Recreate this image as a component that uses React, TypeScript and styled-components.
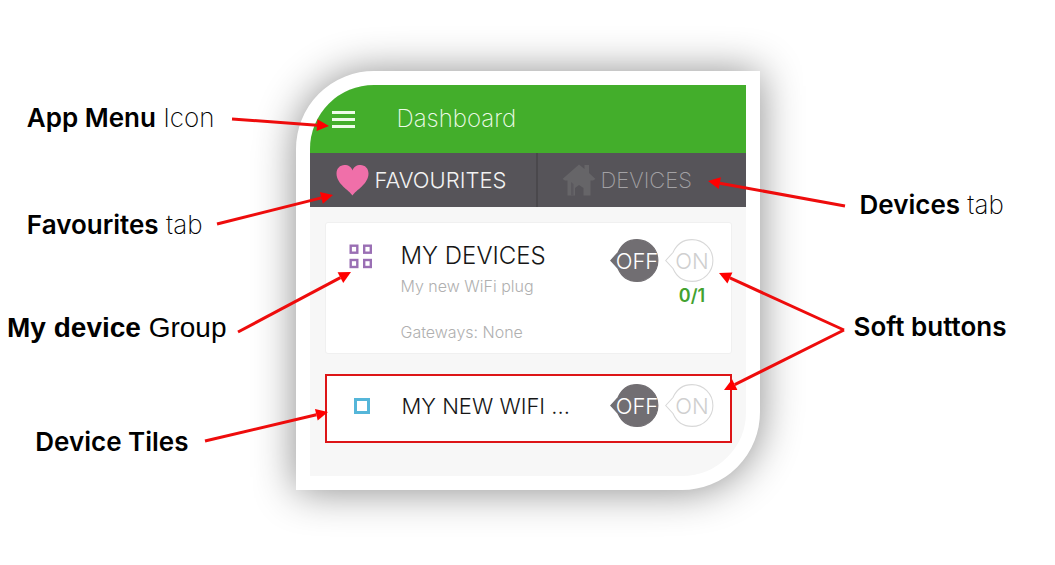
import React from "react";
import styled, { createGlobalStyle } from "styled-components";

const GlobalStyle = createGlobalStyle`
  *, *::before, *::after { box-sizing: border-box; }
  body {
    margin: 0;
    background: #fff;
    color: #000;
    font-family: Inter, "Liberation Sans", sans-serif;
  }
  button {
    border: 0;
    padding: 0;
    background: none;
    font: inherit;
    color: inherit;
    cursor: pointer;
  }
`;

const Figure = styled.main`
  display: grid;
  grid-template-columns: minmax(max-content, 1fr) 464px minmax(max-content, 1fr);
  padding: 71px 0;
`;

const Labels = styled.div<{ $side: "left" | "right" }>`
  display: grid;
  align-content: start;
  justify-items: ${(p) => (p.$side === "left" ? "end" : "start")};
  grid-template-rows: ${(p) => (p.$side === "left" ? "107px 103px 114px auto" : "122px auto")};
  padding-top: ${(p) => (p.$side === "left" ? 31 : 118)}px;
`;

const Label = styled.p<{ $lead: number; $side?: "left" | "right"; $plain?: boolean }>`
  margin: 0;
  font-size: ${(p) => (p.$plain ? 28 : 26)}px;
  line-height: 32px;
  font-weight: ${(p) => (p.$plain ? 400 : 200)};
  font-family: ${(p) => (p.$plain ? '"Liberation Sans", sans-serif' : "inherit")};
  white-space: nowrap;
  ${(p) => (p.$side === "right" ? "padding-left" : "padding-right")}: ${(p) => p.$lead}px;

  b { font-weight: ${(p) => (p.$plain ? 700 : 600)}; }
`;

const PhoneWrap = styled.div`
  position: relative;
`;

const Phone = styled.section`
  border: 14px solid #fff;
  border-radius: 78px 0 78px 0;
  overflow: hidden;
  background: #f7f7f7;
  box-shadow: 0 1px 42px rgba(0, 0, 0, 0.46);
`;

const Header = styled.header`
  display: flex;
  align-items: center;
  gap: 42px;
  height: 68px;
  padding-left: 22px;
  background: #43ae2b;
  color: #eefbe9;
`;

const MenuButton = styled.button`
  display: flex;
  flex-direction: column;
  gap: 4px;
  width: 23px;
`;

const MenuBar = styled.span`
  height: 3px;
  width: 100%;
  background: #eefbe9;
`;

const Title = styled.h1`
  margin: 0;
  font-size: 24px;
  line-height: 28px;
  font-weight: 200;
`;

const Tabs = styled.nav`
  display: grid;
  grid-template-columns: 226fr 210fr;
  height: 54px;
  background: #565459;
`;

const Tab = styled.button<{ $active?: boolean }>`
  display: flex;
  align-items: center;
  gap: 5px;
  padding-left: 26px;
  font-size: 22px;
  line-height: 28px;
  font-weight: ${(p) => (p.$active ? 300 : 200)};
  color: ${(p) => (p.$active ? "#f2f2f2" : "#a3a2a5")};

  & + & { border-left: 2px solid #4a484c; padding-left: 24px; }
`;

const Content = styled.div`
  display: grid;
  gap: 20px;
  padding: 15px 14px 33px 15px;
`;

const Card = styled.article<{ $marked?: boolean }>`
  display: grid;
  grid-template-columns: 75px 1fr auto;
  align-items: start;
  background: #fff;
  border: ${(p) => (p.$marked ? "2px solid #dd1517" : "1px solid #f0f0f0")};
  border-radius: ${(p) => (p.$marked ? 0 : 3)}px;
  min-height: ${(p) => (p.$marked ? 69 : 132)}px;
  padding: ${(p) => (p.$marked ? "8px 16px 0 0" : "16px 17px 0 0")};
`;

const IconCell = styled.span<{ $marked?: boolean }>`
  display: flex;
  padding: ${(p) => (p.$marked ? "14px 0 0 27px" : "5px 0 0 23px")};
`;

const Name = styled.h2`
  margin: 0;
  padding-top: 2px;
  font-size: 24px;
  line-height: 30px;
  font-weight: 300;
  color: #161616;
  white-space: nowrap;
`;

const TileName = styled(Name)`
  padding-top: 7px;
  font-size: 22px;
`;

const Detail = styled.p<{ $spaced?: boolean }>`
  margin: ${(p) => (p.$spaced ? 22 : 3)}px 0 0;
  font-size: 16px;
  line-height: 24px;
  font-weight: 300;
  color: #b0b0b0;
`;

const Controls = styled.div`
  display: grid;
  grid-template-columns: 49px 49px;
  column-gap: 6px;
`;

const PinButton = styled.button<{ $on?: boolean }>`
  position: relative;
  display: flex;
  align-items: center;
  justify-content: center;
  width: 49px;
  height: 43px;
  padding-left: 6px;
  font-size: 22px;
  line-height: 28px;
  font-weight: 300;
  color: ${(p) => (p.$on ? "#cfcfcf" : "#fff")};
`;

const PinShape = styled.svg`
  position: absolute;
  inset: 0;
`;

const PinText = styled.span`
  position: relative;
`;

const Count = styled.output`
  grid-column: 2;
  justify-self: center;
  padding-left: 6px;
  font-size: 18px;
  line-height: 28px;
  font-weight: 600;
  color: #43a22f;
`;

const ArrowLayer = styled.svg`
  position: absolute;
  inset: 0;
  overflow: visible;
  pointer-events: none;
`;

function Heart() {
  return (
    <svg width="34" height="32" viewBox="0 0 34 32" aria-hidden="true">
      <path
        d="M16.500 31.500C13 26 0.500 20 0.500 9.500C0.500 4.500 4 1 8.500 1C12.500 1 15.500 3 16.500 6.500C17.500 3 20.500 1 24.500 1C29 1 32.500 4.500 32.500 9.500C32.500 20 20 26 16.500 31.500Z"
        fill="#f06fa9"
      />
    </svg>
  );
}

function House() {
  return (
    <svg width="34" height="32" viewBox="0 0 34 32" aria-hidden="true">
      <path
        d="M0.500 15L17 0.500L22.500 5V1H27V9L33.500 15L31 16.500H28.500V31.500H21.500V24L17 21L13 24V31.500H5.500V16.500H3Z"
        fill="#666568"
      />
      <path d="M9 31.500V18L11.500 20V31.500Z" fill="#5b595e" />
    </svg>
  );
}

function GroupIcon() {
  return (
    <svg width="24" height="25" viewBox="0 0 24 25" fill="none" stroke="#9a6fb4" strokeWidth="2.400" aria-hidden="true">
      <rect x="1.700" y="1.700" width="6.600" height="7" />
      <rect x="15.200" y="1.700" width="6.600" height="7" />
      <rect x="1.700" y="16" width="6.600" height="7" />
      <rect x="15.200" y="16" width="6.600" height="7" />
    </svg>
  );
}

function SingleIcon() {
  return (
    <svg width="16" height="16" viewBox="0 0 16 16" fill="none" stroke="#55b6d9" strokeWidth="3" aria-hidden="true">
      <rect x="1.500" y="1.500" width="13" height="13" />
    </svg>
  );
}

function Pin({ on }: { on?: boolean }) {
  return (
    <PinButton type="button" $on={on}>
      <PinShape width="49" height="43" viewBox="0 0 49 43" aria-hidden="true">
        <path
          d="M0.700 21.500L8 13.500C11.500 5.500 18.500 0.600 27 0.600A20.900 20.900 0 0 1 27 42.400C18.500 42.400 11.500 37.500 8 29.500Z"
          fill={on ? "#fff" : "#716e72"}
          stroke={on ? "#d8d8d8" : "#716e72"}
          strokeWidth="1.100"
        />
      </PinShape>
      <PinText>{on ? "ON" : "OFF"}</PinText>
    </PinButton>
  );
}

type Point = [number, number];

const arrows: { from: Point; to: Point }[] = [
  { from: [-64, 48], to: [33, 55] },
  { from: [-79, 153], to: [37, 124] },
  { from: [-58, 261], to: [55, 201] },
  { from: [-91, 370], to: [32, 341] },
  { from: [549, 135], to: [412, 110] },
  { from: [548, 259], to: [423, 202] },
  { from: [548, 259], to: [428, 319] },
];

const HEAD = 12;

function Arrow({ from, to }: { from: Point; to: Point }) {
  const length = Math.hypot(to[0] - from[0], to[1] - from[1]);
  const ux = (to[0] - from[0]) / length;
  const uy = (to[1] - from[1]) / length;
  const bx = to[0] - ux * HEAD;
  const by = to[1] - uy * HEAD;
  const half = HEAD / 2;
  return (
    <g>
      <line x1={from[0]} y1={from[1]} x2={bx} y2={by} stroke="#ee0c0c" strokeWidth="3" />
      <polygon
        points={`${to[0]},${to[1]} ${bx - uy * half},${by + ux * half} ${bx + uy * half},${by - ux * half}`}
        fill="#ff0000"
      />
    </g>
  );
}

export default function App() {
  return (
    <>
      <GlobalStyle />
      <Figure>
        <Labels $side="left">
          <Label $lead={81}><b>App Menu</b> Icon</Label>
          <Label $lead={93}><b>Favourites</b> tab</Label>
          <Label $lead={69} $plain><b>My device</b> Group</Label>
          <Label $lead={107}><b>Device Tiles</b></Label>
        </Labels>

        <PhoneWrap>
          <Phone>
            <Header>
              <MenuButton type="button" aria-label="Menu">
                <MenuBar />
                <MenuBar />
                <MenuBar />
              </MenuButton>
              <Title>Dashboard</Title>
            </Header>
            <Tabs>
              <Tab type="button" $active><Heart />FAVOURITES</Tab>
              <Tab type="button"><House />DEVICES</Tab>
            </Tabs>
            <Content>
              <Card>
                <IconCell><GroupIcon /></IconCell>
                <div>
                  <Name>MY DEVICES</Name>
                  <Detail>My new WiFi plug</Detail>
                  <Detail $spaced>Gateways: None</Detail>
                </div>
                <Controls>
                  <Pin />
                  <Pin on />
                  <Count>0/1</Count>
                </Controls>
              </Card>
              <Card $marked>
                <IconCell $marked><SingleIcon /></IconCell>
                <TileName>MY NEW WIFI ...</TileName>
                <Controls>
                  <Pin />
                  <Pin on />
                </Controls>
              </Card>
            </Content>
          </Phone>
          <ArrowLayer width="464" height="419" aria-hidden="true">
            {arrows.map((a) => (
              <Arrow key={`${a.from}-${a.to}`} {...a} />
            ))}
          </ArrowLayer>
        </PhoneWrap>

        <Labels $side="right">
          <Label $side="right" $lead={100}><b>Devices</b> tab</Label>
          <Label $side="right" $lead={94}><b>Soft buttons</b></Label>
        </Labels>
      </Figure>
    </>
  );
}
